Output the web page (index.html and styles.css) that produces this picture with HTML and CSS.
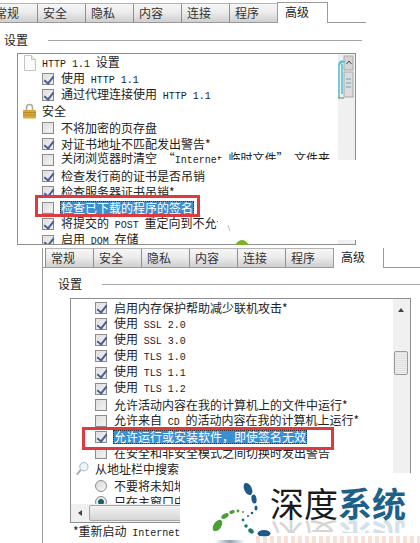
FILE: index.html
```html
<!DOCTYPE html>
<html lang="zh-CN">
<head>
<meta charset="utf-8">
<title>Internet 选项 高级</title>
<link rel="stylesheet" href="styles.css">
</head>
<body>
<div class="sheet">
  <section class="panel panel-a">
    <div class="tabs">
      <span class="tab">常规</span><span class="tab">安全</span><span class="tab">隐私</span><span class="tab">内容</span><span class="tab">连接</span><span class="tab">程序</span><span class="tab active">高级</span>
    </div>
    <div class="group"><span class="group-label">设置</span><span class="group-line"></span></div>
    <div class="list">
      <div class="rows">
        <div class="row head"><svg class="ico" viewBox="0 0 13 16"><path d="M1.500.5h7l4 4v11h-11z" fill="#fbfbfb" stroke="#c4c4c4"/><path d="M8.500.5v4h4" fill="#eee" stroke="#c4c4c4"/></svg><span><em class="la">HTTP 1.1</em> 设置</span></div>
        <div class="row"><i class="cb on"></i><span>使用 <em class="la">HTTP 1.1</em></span></div>
        <div class="row"><i class="cb on"></i><span>通过代理连接使用 <em class="la">HTTP 1.1</em></span></div>
        <div class="row head"><svg class="ico" viewBox="0 0 13 16"><path d="M3.500 7V4.500a3 3 0 0 1 6 0V7" fill="none" stroke="#a8a8a0" stroke-width="1.600"/><rect x="0" y="7" width="13" height="8.500" rx="1" fill="#d7a93c"/><path d="M0 9.500h13M0 12h13" stroke="#b98a24"/></svg><span>安全</span></div>
        <div class="row"><i class="cb"></i><span>不将加密的页存盘</span></div>
        <div class="row"><i class="cb on"></i><span>对证书地址不匹配发出警告*</span></div>
        <div class="row"><i class="cb"></i><span>关闭浏览器时清空 “<em class="la">Internet</em> 临时文件” 文件夹</span></div>
        <div class="row"><i class="cb on"></i><span>检查发行商的证书是否吊销</span></div>
        <div class="row"><i class="cb on"></i><span>检查服务器证书吊销*</span></div>
        <div class="row"><i class="cb"></i><span class="sel">检查已下载的程序的签名</span></div>
        <div class="row"><i class="cb on"></i><span>将提交的 <em class="la">POST</em> 重定向到不允许发送的区域时发出警告</span></div>
        <div class="row"><i class="cb on"></i><span>启用 <em class="la">DOM</em> 存储</span></div>
      </div>
      <div class="vbar">
        <svg class="vbar-art" viewBox="0 0 16 46"><rect x="6" y="1" width="9" height="14" fill="#d4d4d4" stroke="#a9a9a9"/><path d="M8.500 9l2.500-3 2.500 3" fill="none" stroke="#444"/><rect x="6" y="17" width="9" height="25" fill="#dcdcdc" stroke="#a9a9a9"/><path d="M8 24h5M8 28h5M8 32h5" stroke="#6f9fb0"/><path d="M1 43V10q0-4 4-4M1 10c2-3 5-4 6-3M4 9v30" fill="none" stroke="#5cc0d4" stroke-width="1.600"/><path d="M0 43h6" stroke="#777"/></svg>
      </div>
    </div>
    <div class="mask mask-a"></div>
    <svg class="blip" viewBox="0 0 30 20"><path d="M8 20q7-10 14 0z" fill="#7fb02a"/><path d="M1 0l2 6" stroke="#bbb"/></svg>
    <div class="redbox redbox-a"></div>
  </section>

  <section class="panel panel-b">
    <div class="tabs">
      <span class="tab">常规</span><span class="tab">安全</span><span class="tab">隐私</span><span class="tab">内容</span><span class="tab">连接</span><span class="tab">程序</span><span class="tab active">高级</span>
    </div>
    <div class="group"><span class="group-label">设置</span><span class="group-line"></span></div>
    <div class="list">
      <div class="list-top">
        <div class="rows">
          <div class="row"><i class="cb on"></i><span>启用内存保护帮助减少联机攻击*</span></div>
          <div class="row"><i class="cb on"></i><span>使用 <em class="la">SSL 2.0</em></span></div>
          <div class="row"><i class="cb on"></i><span>使用 <em class="la">SSL 3.0</em></span></div>
          <div class="row"><i class="cb on"></i><span>使用 <em class="la">TLS 1.0</em></span></div>
          <div class="row"><i class="cb on"></i><span>使用 <em class="la">TLS 1.1</em></span></div>
          <div class="row"><i class="cb on"></i><span>使用 <em class="la">TLS 1.2</em></span></div>
          <div class="row"><i class="cb"></i><span>允许活动内容在我的计算机上的文件中运行*</span></div>
          <div class="row"><i class="cb"></i><span>允许来自 <em class="la">CD</em> 的活动内容在我的计算机上运行*</span></div>
          <div class="row"><i class="cb on"></i><span class="sel">允许运行或安装软件，即使签名无效</span></div>
          <div class="row"><i class="cb"></i><span>在安全和非安全模式之间切换时发出警告</span></div>
          <div class="row head"><svg class="ico" viewBox="0 0 14 16"><circle cx="8.500" cy="5.500" r="4.500" fill="#eef4f8" stroke="#9db0bd"/><path d="M5 9l-4 5" stroke="#a8a8a8" stroke-width="2"/></svg><span>从地址栏中搜索</span></div>
          <div class="row"><i class="radio"></i><span>不要将未知地址提交给自动搜索</span></div>
          <div class="row"><i class="radio on"></i><span>只在主窗口中显示结果</span></div>
        </div>
        <div class="vbar vbar-b">
          <span class="arrow-up"></span>
          <span class="thumb"></span>
        </div>
      </div>
      <div class="hbar"><span class="arrow-left"></span><span class="hthumb"></span></div>
    </div>
    <div class="footnote">*重新启动 <em class="la">Internet Explorer</em> 之后生效</div>
    <div class="redbox redbox-b"></div>
    <div class="mask mask-b">
      <svg class="logo-mark" viewBox="0 0 66 60">
        <g fill="#1d5a86">
          <ellipse cx="40" cy="8" rx="3.800" ry="6.500" transform="rotate(-25 40 8)"/>
          <ellipse cx="46" cy="18" rx="2.500" ry="4.500" transform="rotate(-10 46 18)"/>
          <ellipse cx="48" cy="27" rx="1.500" ry="2.500"/>
          <circle cx="44" cy="32" r="1.300"/>
          <circle cx="40" cy="35" r="1"/>
        </g>
        <g fill="#4f9d35">
          <ellipse cx="9.500" cy="44.500" rx="3.800" ry="6.500" transform="rotate(35 9.500 44.500)"/>
          <ellipse cx="17" cy="35" rx="2.200" ry="4" transform="rotate(60 17 35)"/>
          <ellipse cx="24" cy="31" rx="1.800" ry="2.800" transform="rotate(75 24 31)"/>
          <circle cx="30" cy="30" r="1.400"/>
          <circle cx="35" cy="31" r="1"/>
        </g>
        <g fill="#1a7a70">
          <circle cx="35" cy="39" r="1.400"/>
          <circle cx="38" cy="45" r="1.800"/>
          <ellipse cx="43" cy="50" rx="3" ry="2.200" transform="rotate(35 43 50)"/>
        </g>
        <ellipse cx="56" cy="52.500" rx="6.500" ry="3.500" fill="#1d5a86"/>
      </svg>
      <div class="logo-words">
        <div class="logo-text"><span>深度</span><b>系统</b></div>
        <div class="logo-text logo-reflect" aria-hidden="true"><span>深度</span><b>系统</b></div>
      </div>
      <span class="logo-streak"></span>
      <span class="logo-url"></span>
    </div>
  </section>
</div>
</body>
</html>
```
FILE: styles.css
```css
* { box-sizing: border-box; }
html, body { margin: 0; padding: 0; background: #fff; }
body { font: 12px/16px "Noto Sans CJK SC", sans-serif; color: #222; }
.sheet { width: 420px; height: 543px; overflow: hidden; position: relative; }

.la { font: normal 10px/16px "Liberation Mono", monospace; word-spacing: 0; }

.panel { position: relative; overflow: hidden; }
.panel-a { height: 245px; width: 366px; }
.panel-b { height: 295px; margin: 3px 0 0 42px; width: 378px; border-left: 1px solid #9a9a9a; }

.tabs { display: flex; align-items: flex-end; border-bottom: 1px solid #9a9a9a; }
.panel-a .tabs { height: 23px; margin-left: -11px; }
.panel-b .tabs { height: 20px; margin-left: -1px; padding-left: 3px; }
.tab {
  width: 48px; height: 19px; flex: none;
  padding-left: 5px; line-height: 18px; color: #333;
  border-left: 1px solid #8f8f8f; border-top: 1px solid #b5b5b5;
  background: linear-gradient(#f6f6f6, #ececec 45%, #cfcfcf);
}
.tab.active {
  width: 51px; height: 21px; margin-bottom: -1px; padding-left: 7px;
  border: 1px solid #9a9a9a; border-bottom: 0; background: #fff; color: #222;
}

.group { display: flex; align-items: center; height: 16px; }
.panel-a .group { margin: 9px 4px 0 4px; }
.panel-b .group { margin: 8px 0 0 15px; }
.group-label { width: 44px; flex: none; }
.group-line { flex: 1; height: 1px; background: #a5a5a5; }

.list { border: 1px solid #8e8e8e; background: #fff; overflow: hidden; }
.panel-a .list { display: flex; margin: 5px 10px 0 17px; height: 192px; }
.panel-b .list { margin: 6px 0 0 27px; width: 341px; height: 225px; display: flex; flex-direction: column; }
.list-top { display: flex; flex: 1; min-height: 0; }
.rows { flex: 1; min-width: 0; overflow: hidden; padding-top: 1px; }
.row { display: flex; align-items: center; gap: 7px; height: 16.15px; padding-left: 24px; white-space: nowrap; word-spacing: 3px; }
.head { padding-left: 5px; gap: 6px; }
.ico { width: 13px; height: 16px; flex: none; }

.cb { width: 12px; height: 12px; flex: none; position: relative; border: 1px solid #8c8c8c; background: linear-gradient(135deg, #dcdcdc, #f6f6f6); box-shadow: inset 0 0 0 1px #e6e6e6; }
.cb.on::after { content: ""; position: absolute; left: 3px; top: 0; width: 4px; height: 8px; border: solid #4a5f96; border-width: 0 2px 2px 0; transform: rotate(38deg); }
.radio { width: 12px; height: 12px; flex: none; border-radius: 50%; border: 1px solid #8c8c8c; background: linear-gradient(135deg, #d8d8d8, #f6f6f6); }
.radio.on { background: radial-gradient(circle, #13636e 0 2.500px, #e8e8e8 3.500px); }

.sel { background: #3a8fd0; color: #fff; padding: 0 1px; line-height: 14px; height: 14px; outline: 1px dotted #333; outline-offset: -1px; margin-left: -1px; }

.vbar { width: 17px; flex: none; background: #f0f0f0; position: relative; }
.vbar-art { position: absolute; left: 0; top: 1px; width: 16px; height: 46px; }
.arrow-up { position: absolute; left: 5px; top: 9px; border: 3px solid transparent; border-top: 0; border-bottom: 4px solid #444; }
.thumb { position: absolute; left: 1px; top: 52px; width: 14px; height: 24px; background: repeating-linear-gradient(#dfdfdf 0 1px, #efefef 1px 2px); border: 1px solid #9a9a9a; border-radius: 2px; }
.hbar { height: 18px; flex: none; background: #f0f0f0; display: flex; align-items: center; padding-left: 7px; gap: 7px; }
.arrow-left { flex: none; border: 3px solid transparent; border-left: 0; border-right: 4px solid #444; }
.hthumb { flex: none; width: 260px; height: 16px; background: linear-gradient(#f2f2f2, #d6d6d6); border: 1px solid #a8a8a8; border-radius: 2px; }

.footnote { margin: 0 0 0 30px; height: 16px; white-space: nowrap; word-spacing: 3px; }

.redbox { position: absolute; border: 3px solid #dd3a3f; }
.redbox-a { left: 35px; top: 195px; width: 165px; height: 22px; }
.redbox-b { left: 39px; top: 179px; width: 252px; height: 23px; }

.mask { position: absolute; background: #fff; }
.mask-a { left: 218px; top: 160px; right: 0; height: 80px; }
.blip { position: absolute; left: 227px; top: 225px; width: 30px; height: 20px; }
.mask-b { left: 137px; top: 225px; right: 0; bottom: 0; }
.logo-mark { position: absolute; left: 28px; top: 8px; width: 66px; height: 60px; }
.logo-words { position: absolute; left: 90px; top: 12px; }
.logo-text { font-size: 34px; line-height: 36px; color: #1b1b1b; white-space: nowrap; }
.logo-text b { color: #1d6189; font-weight: 700; }
.logo-reflect { height: 14px; overflow: hidden; transform: scaleY(-1); opacity: .18; margin-top: -2px; display: flex; align-items: flex-end; }
.logo-streak { position: absolute; left: 35px; top: 67px; width: 30px; height: 3px; background: linear-gradient(90deg, #fff, #8fa3b3, #fff); }
.logo-url { position: absolute; left: 76px; top: 63px; right: 0; height: 7px; background: repeating-linear-gradient(90deg, #f7d9cc 0 4px, #fff 4px 7px); opacity: .8; }
```
